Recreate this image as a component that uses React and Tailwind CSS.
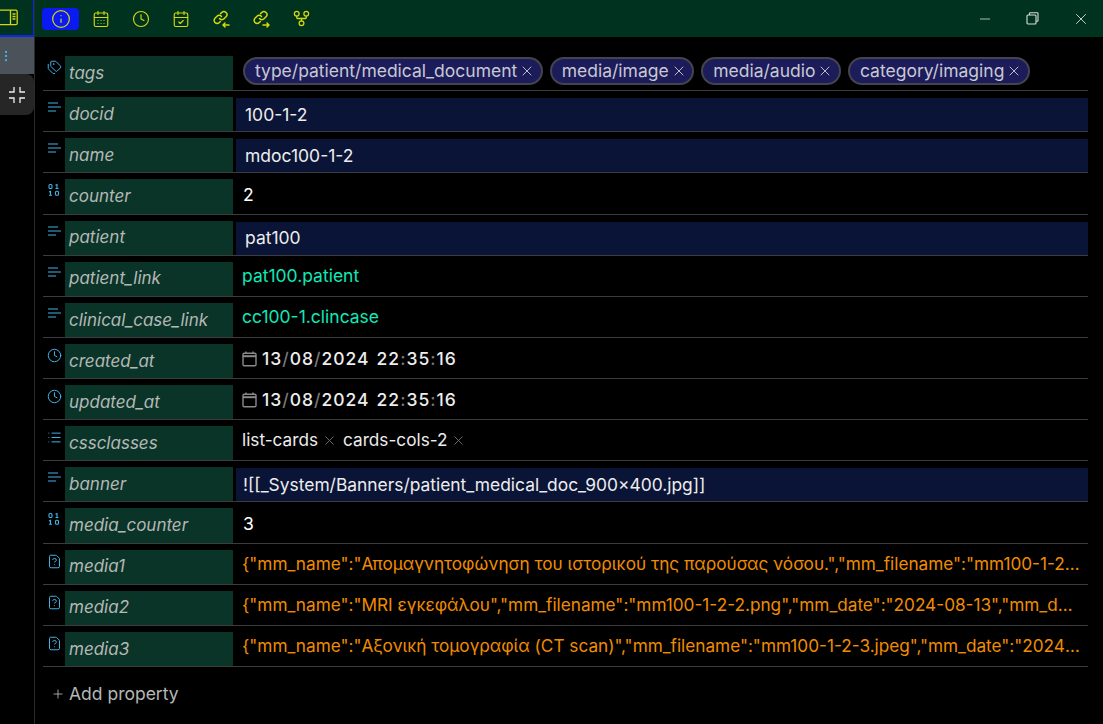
import { Info, CalendarDays, Clock, CalendarCheck, GitFork, Tags, List, FileQuestion, X, Plus, Minus, MoreVertical } from 'lucide-react';

const TextIcon = () => (
  <svg width="14" height="14" viewBox="0 0 14 14" fill="none" stroke="currentColor" strokeWidth="1.2">
    <path d="M1 2h10M1 6h13M1 10h8" />
  </svg>
);

const BinaryIcon = () => (
  <svg width="14" height="14" viewBox="0 0 14 14" fill="none" stroke="currentColor" strokeWidth="1.1">
    <rect x="2" y="1.5" width="3" height="4" rx="1" />
    <path d="M8.5 2.2l1.5-.7v4M8.5 5.5h3" />
    <path d="M2 9l1.5-.7v4M2 12.3h3" />
    <rect x="8.5" y="8.3" width="3" height="4" rx="1" />
  </svg>
);

const LinksIcon = ({ out }) => (
  <svg width="18" height="18" viewBox="0 0 18 18" fill="none" stroke="currentColor" strokeWidth="1.5" strokeLinecap="round" strokeLinejoin="round">
    <path d="M7.5 8.5a3 3 0 0 0 4.5.3l2-2a3 3 0 0 0-4.3-4.3L8.6 3.6" />
    <path d="M9.5 6.5a3 3 0 0 0-4.5-.3l-2 2a3 3 0 0 0 4.3 4.3l1-1" />
    {out ? <path d="M11 15h6M15 13l2 2-2 2" /> : <path d="M11 15h6M13 13l-2 2 2 2" />}
  </svg>
);

// native date input's picker glyph, grey with a heavy header bar
const DateGlyph = () => (
  <svg width="15" height="16" viewBox="0 0 15 16" fill="none" stroke="#8a8a8a" strokeWidth="1.4" className="mr-[5px] shrink-0">
    <rect x="1" y="2.2" width="13" height="12.6" rx="1.2" />
    <path d="M1 5.2h13" strokeWidth="2" />
    <path d="M4 .6v2M11 .6v2" />
  </svg>
);

const tags = ['type/patient/medical_document', 'media/image', 'media/audio', 'category/imaging'];

const rows = [
  { key: 'tags', icon: Tags, type: 'tags' },
  { key: 'docid', icon: TextIcon, type: 'input', value: '100-1-2' },
  { key: 'name', icon: TextIcon, type: 'input', value: 'mdoc100-1-2' },
  { key: 'counter', icon: BinaryIcon, type: 'plain', value: '2' },
  { key: 'patient', icon: TextIcon, type: 'input', value: 'pat100' },
  { key: 'patient_link', icon: TextIcon, type: 'link', value: 'pat100.patient' },
  { key: 'clinical_case_link', icon: TextIcon, type: 'link', value: 'cc100-1.clincase' },
  { key: 'created_at', icon: Clock, type: 'date' },
  { key: 'updated_at', icon: Clock, type: 'date' },
  { key: 'cssclasses', icon: List, type: 'list' },
  { key: 'banner', icon: TextIcon, type: 'input', tight: true, value: '![[_System/Banners/patient_medical_doc_900x400.jpg]]' },
  { key: 'media_counter', icon: BinaryIcon, type: 'plain', value: '3' },
  { key: 'media1', icon: FileQuestion, type: 'json', value: '{"mm_name":"Απομαγνητοφώνηση του ιστορικού της παρούσας νόσου.","mm_filename":"mm100-1-2-1.mp3","mm_date":"2024-08-13"}' },
  { key: 'media2', icon: FileQuestion, type: 'json', value: '{"mm_name":"MRI εγκεφάλου","mm_filename":"mm100-1-2-2.png","mm_date":"2024-08-13","mm_description":"MRI"}' },
  { key: 'media3', icon: FileQuestion, type: 'json', value: '{"mm_name":"Αξονική τομογραφία (CT scan)","mm_filename":"mm100-1-2-3.jpeg","mm_date":"2024-08-13","mm_description":""}' },
];

function Value({ row }) {
  if (row.type === 'tags') {
    return (
      <div className="flex gap-[7px] pl-[10px] pt-[1px]">
        {tags.map((t) => (
          <span key={t} className="flex h-[28px] items-center gap-[2px] rounded-full border-2 border-[#44444e] bg-[#1c1c5a] pl-[10px] pr-[5.5px] text-[17.5px] text-[#c8c8d2]">
            {t}
            <X size={16} strokeWidth={1.4} />
          </span>
        ))}
      </div>
    );
  }
  if (row.type === 'input') {
    return (
      <div className={`ml-[3px] mt-[1px] flex h-[33px] items-center bg-[#0a1436] text-[#ededed] ${row.tight ? 'pl-[7px] text-[17.4px]' : 'pl-[9px] text-[17.5px]'}`}>
        {row.value}
      </div>
    );
  }
  if (row.type === 'plain') {
    return <div className="pl-[10px] pt-[1px] text-[17.5px] leading-[30px] text-white">{row.value}</div>;
  }
  if (row.type === 'link') {
    return <div className="pl-[9px] text-[17.5px] leading-[28px] text-[#10e8b8]">{row.value}</div>;
  }
  if (row.type === 'date') {
    return (
      <div className="flex items-center pl-[9px] pt-[1px] text-[17.5px] font-medium leading-[28px] tracking-[1px] text-[#ededed]">
        <DateGlyph />
        <span>13<span className="text-[#777]">/</span>08<span className="text-[#777]">/</span>2024</span>
        <span className="ml-[7px]">22<span className="text-[#777]">:</span>35<span className="text-[#777]">:</span>16</span>
      </div>
    );
  }
  if (row.type === 'list') {
    return (
      <div className="flex items-center pl-[9px] text-[17.2px] leading-[28px] text-[#ededed]">
        <span>list-cards</span>
        <X size={15} strokeWidth={1.4} className="ml-[4px] mr-[6px] text-[#777]" />
        <span>cards-cols-2</span>
        <X size={15} strokeWidth={1.4} className="ml-[3px] text-[#777]" />
      </div>
    );
  }
  return <div className="truncate pl-[9px] pr-[8px] text-[17.2px] leading-[28px] text-[#f08c00]">{row.value}</div>;
}

function Row({ row }) {
  const Icon = row.icon;
  return (
    <div className="flex h-[41.14px] border-b border-[#3c3c3c] pt-[6px]">
      <div className="w-[22px] shrink-0 pl-[4px] pt-[4px] text-[#3fb2e6]">
        <Icon size={15} strokeWidth={1.6} />
      </div>
      <div className="flex w-[168px] shrink-0 items-center bg-[#0b3428] pl-[4px] pt-[1px] text-[17px] italic text-[#b4b8b6]">
        {row.key}
      </div>
      <div className="min-w-0 flex-1">
        <Value row={row} />
      </div>
    </div>
  );
}

export default function App() {
  const toolIcon = 'text-[#d4d80e]';
  return (
    <div className="flex h-[724px] w-[1103px] overflow-hidden bg-black font-['Inter',sans-serif]">
      {/* left rail */}
      <div className="flex w-[35px] shrink-0 flex-col border-r border-[#2b2b2b]">
        <div className="flex h-[37px] items-center overflow-hidden border-b-2 border-r border-b-[#0a28e6] border-r-[#0a28e6] bg-[#00331f]">
          <svg width="18" height="17" viewBox="0 0 18 17" fill="none" stroke="#d4d80e" strokeWidth="1.3" className="shrink-0">
            <rect x="-4" y="1.2" width="21.2" height="14.5" rx="1.5" />
            <path d="M10.5 1.2v14.5M12.5 5h3M12.5 7.5h3M12.5 10h3" />
          </svg>
        </div>
        <div className="flex h-[37px] items-center justify-center bg-[#4b5259] text-[#3fb2e6]">
          <MoreVertical size={14} strokeWidth={2} className="-ml-[22px]" />
        </div>
        <div className="flex h-[41px] w-[34px] items-center justify-center rounded-br-[8px] rounded-tr-[8px] bg-[#262626]">
          <svg width="16" height="16" viewBox="0 0 16 16" fill="none" stroke="#f0f0f0" strokeWidth="1.3">
            <path d="M0 5h5V0M11 0v5h5M0 11h5v5M16 11h-5v5" />
          </svg>
        </div>
      </div>

      <div className="flex min-w-0 flex-1 flex-col">
        {/* toolbar */}
        <div className="flex h-[37px] shrink-0 items-center bg-[#00331f] pl-[7px]">
          <div className={`flex h-[22px] w-[37px] items-center justify-center rounded-[4px] bg-[#0a1af0] ${toolIcon}`}>
            <Info size={20} strokeWidth={1.5} />
          </div>
          <div className={`ml-[13px] flex items-center gap-[22px] ${toolIcon}`}>
            <CalendarDays size={18} strokeWidth={1.5} />
            <Clock size={18} strokeWidth={1.5} />
            <CalendarCheck size={18} strokeWidth={1.5} />
            <LinksIcon />
            <LinksIcon out />
            <GitFork size={19} strokeWidth={1.6} />
          </div>
          <div className="ml-auto flex items-center gap-[33px] pr-[13px] text-[#d8dedb]">
            <Minus size={16} strokeWidth={1.2} />
            <svg width="13" height="13" viewBox="0 0 13 13" fill="none" stroke="currentColor" strokeWidth="1.1">
              <rect x="1" y="3" width="9" height="9" rx="1" />
              <path d="M3.5 3V1.5a.7.7 0 0 1 .7-.7h7.1a.7.7 0 0 1 .7.7v7a.7.7 0 0 1-.7.7H10" />
            </svg>
            <X size={18} strokeWidth={1.2} />
          </div>
        </div>

        {/* properties */}
        <div className="pl-[8px] pr-[15px] pt-[13px]">
          {rows.map((row) => (
            <Row key={row.key} row={row} />
          ))}
          <div className="flex items-center gap-[4px] pl-[8px] pt-[14px] text-[17.5px] text-[#b4b8b6]">
            <Plus size={14} strokeWidth={1.5} />
            Add property
          </div>
        </div>
      </div>
    </div>
  );
}
